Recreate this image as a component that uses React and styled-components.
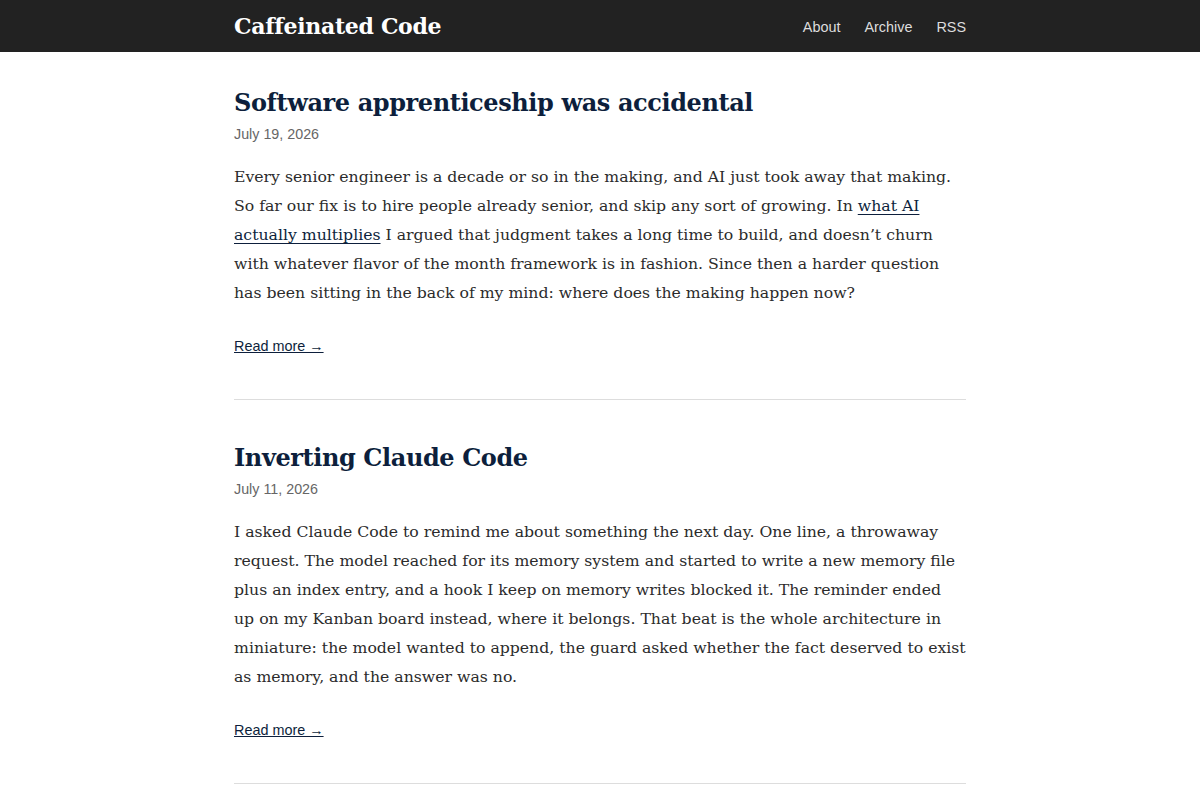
import styled, { createGlobalStyle } from "styled-components";

const GlobalStyle = createGlobalStyle`
  body {
    margin: 0;
    background: #fff;
    font-family: "DejaVu Serif", serif;
  }
`;

const Header = styled.header`
  background-color: #222;
  height: 52px;
`;

const HeaderInner = styled.div`
  width: 732px;
  height: 100%;
  margin: 0 auto;
  display: flex;
  align-items: center;
  justify-content: space-between;
`;

const SiteTitle = styled.a`
  font-family: "DejaVu Serif", serif;
  font-weight: 700;
  font-size: 22px;
  color: #fff;
  text-decoration: none;
  letter-spacing: -0.3px;
`;

const Nav = styled.nav`
  display: flex;
  gap: 24px;
  padding-top: 2px;
`;

const NavLink = styled.a`
  font-family: "Liberation Sans", Arial, sans-serif;
  font-size: 14.4px;
  color: #ddd;
  text-decoration: none;
`;

const Main = styled.main`
  width: 732px;
  margin: 0 auto;
  padding-top: 33px;
`;

const Post = styled.article`
  padding: 0 0 44px;
  margin-bottom: 40px;
  border-bottom: 1px solid #ddd;
`;

const PostTitle = styled.h2`
  margin: 0;
  font-family: "DejaVu Serif", serif;
  font-weight: 700;
  font-size: 24px;
  line-height: 36px;
  color: #0d1f3c;
  letter-spacing: -0.4px;
`;

const PostDate = styled.div`
  font-family: "Liberation Sans", Arial, sans-serif;
  font-size: 14.3px;
  color: #666;
  margin-top: 5px;
`;

const Excerpt = styled.p`
  margin: 20px 0 29px;
  font-size: 15.7px;
  line-height: 29px;
  color: #2b2b2b;
`;

const InlineLink = styled.a`
  color: #0d1f3c;
  text-decoration: underline;
  text-underline-offset: 3px;
`;

const ReadMore = styled.a`
  font-family: "Liberation Sans", Arial, sans-serif;
  font-size: 14.4px;
  color: #0d1f3c;
  text-decoration: underline;
`;

const posts = [
  {
    title: "Software apprenticeship was accidental",
    date: "July 19, 2026",
    body: (
      <>
        Every senior engineer is a decade or so in the making, and AI just took
        away that making. So far our fix is to hire people already senior, and
        skip any sort of growing. In{" "}
        <InlineLink href="#">what AI actually multiplies</InlineLink> I argued
        that judgment takes a long time to build, and doesn’t churn with
        whatever flavor of the month framework is in fashion. Since then a
        harder question has been sitting in the back of my mind: where does the
        making happen now?
      </>
    ),
  },
  {
    title: "Inverting Claude Code",
    date: "July 11, 2026",
    body: (
      <>
        I asked Claude Code to remind me about something the next day. One line,
        a throwaway request. The model reached for its memory system and started
        to write a new memory file plus an index entry, and a hook I keep on
        memory writes blocked it. The reminder ended up on my Kanban board
        instead, where it belongs. That beat is the whole architecture in
        miniature: the model wanted to append, the guard asked whether the fact
        deserved to exist as memory, and the answer was no.
      </>
    ),
  },
];

const App = () => {
  return (
    <>
      <GlobalStyle />
      <Header>
        <HeaderInner>
          <SiteTitle href="#">Caffeinated Code</SiteTitle>
          <Nav>
            <NavLink href="#">About</NavLink>
            <NavLink href="#">Archive</NavLink>
            <NavLink href="#">RSS</NavLink>
          </Nav>
        </HeaderInner>
      </Header>
      <Main>
        {posts.map((post) => (
          <Post key={post.title}>
            <PostTitle>{post.title}</PostTitle>
            <PostDate>{post.date}</PostDate>
            <Excerpt>{post.body}</Excerpt>
            <ReadMore href="#">Read more →</ReadMore>
          </Post>
        ))}
      </Main>
    </>
  );
};

export default App;
